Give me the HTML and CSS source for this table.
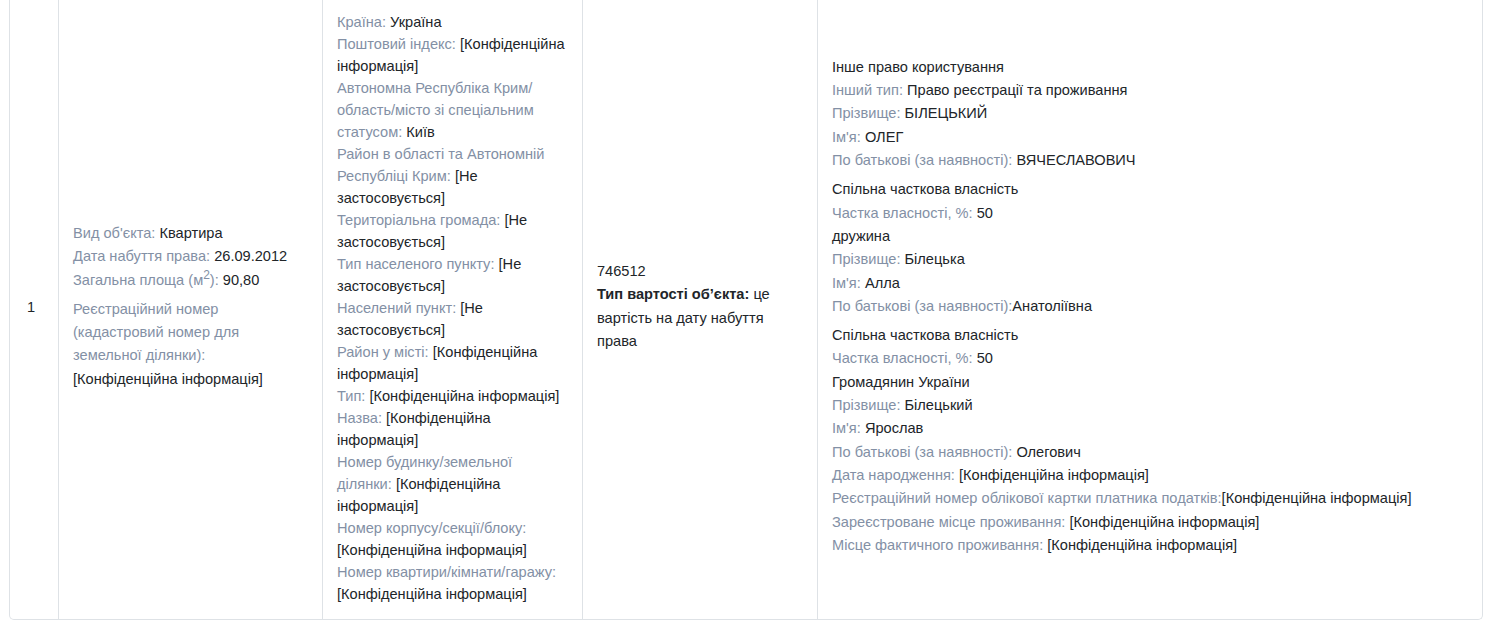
FILE: index.html
```html
<!DOCTYPE html>
<html lang="uk">
<head>
<meta charset="utf-8">
<title>Об'єкт</title>
<link rel="stylesheet" href="styles.css">
</head>
<body>
<div class="wrap">
  <table class="grid">
    <tr>
      <td class="c1">1</td>
      <td class="c2">
        <div class="blk">
          <div><span class="l">Вид об'єкта:</span> Квартира</div>
          <div><span class="l">Дата набуття права:</span> 26.09.2012</div>
          <div><span class="l">Загальна площа (м<sup>2</sup>):</span> 90,80</div>
        </div>
        <div class="blk"><span class="l">Реєстраційний номер (кадастровий номер для земельної ділянки):</span> [Конфіденційна інформація]</div>
      </td>
      <td class="c3">
        <div><span class="l">Країна:</span> Україна</div>
        <div><span class="l">Поштовий індекс:</span> [Конфіденційна інформація]</div>
        <div><span class="l">Автономна Республіка Крим/область/місто зі спеціальним статусом:</span> Київ</div>
        <div><span class="l">Район в області та Автономній Республіці Крим:</span> [Не застосовується]</div>
        <div><span class="l">Територіальна громада:</span> [Не застосовується]</div>
        <div><span class="l">Тип населеного пункту:</span> [Не застосовується]</div>
        <div><span class="l">Населений пункт:</span> [Не застосовується]</div>
        <div><span class="l">Район у місті:</span> [Конфіденційна інформація]</div>
        <div><span class="l">Тип:</span> [Конфіденційна інформація]</div>
        <div><span class="l">Назва:</span> [Конфіденційна інформація]</div>
        <div><span class="l">Номер будинку/земельної ділянки:</span> [Конфіденційна інформація]</div>
        <div><span class="l">Номер корпусу/секції/блоку:</span> [Конфіденційна інформація]</div>
        <div><span class="l">Номер квартири/кімнати/гаражу:</span> [Конфіденційна інформація]</div>
      </td>
      <td class="c4">
        <div class="blk">
          <div>746512</div>
          <div><b>Тип вартості об’єкта:</b> це вартість на дату набуття права</div>
        </div>
      </td>
      <td class="c5">
        <div class="blk">
          <div>Інше право користування</div>
          <div><span class="l">Інший тип:</span> Право реєстрації та проживання</div>
          <div><span class="l">Прізвище:</span> БІЛЕЦЬКИЙ</div>
          <div><span class="l">Ім'я:</span> ОЛЕГ</div>
          <div><span class="l">По батькові (за наявності):</span> ВЯЧЕСЛАВОВИЧ</div>
        </div>
        <div class="blk">
          <div>Спільна часткова власність</div>
          <div><span class="l">Частка власності, %:</span> 50</div>
          <div>дружина</div>
          <div><span class="l">Прізвище:</span> Білецька</div>
          <div><span class="l">Ім'я:</span> Алла</div>
          <div><span class="l">По батькові (за наявності):</span>Анатоліївна</div>
        </div>
        <div class="blk">
          <div>Спільна часткова власність</div>
          <div><span class="l">Частка власності, %:</span> 50</div>
          <div>Громадянин України</div>
          <div><span class="l">Прізвище:</span> Білецький</div>
          <div><span class="l">Ім'я:</span> Ярослав</div>
          <div><span class="l">По батькові (за наявності):</span> Олегович</div>
          <div><span class="l">Дата народження:</span> [Конфіденційна інформація]</div>
          <div><span class="l">Реєстраційний номер облікової картки платника податків:</span>[Конфіденційна інформація]</div>
          <div><span class="l">Зареєстроване місце проживання:</span> [Конфіденційна інформація]</div>
          <div><span class="l">Місце фактичного проживання:</span> [Конфіденційна інформація]</div>
        </div>
      </td>
    </tr>
  </table>
</div>
</body>
</html>
```

FILE: styles.css
```css
html, body {
  margin: 0;
  padding: 0;
  background: #fff;
}
body {
  font-family: "Liberation Sans", Arial, sans-serif;
  font-size: 14.6px;
  color: #212529;
}
.wrap {
  margin: 0 10px 0 9px;
  border: 1px solid #dee2e6;
  border-top: none;
  border-radius: 0 0 5px 5px;
  overflow: hidden;
}
.grid {
  width: 100%;
  border-collapse: separate;
  border-spacing: 0;
  table-layout: fixed;
}
.grid td {
  box-sizing: border-box;
  border-left: 1px solid #dee2e6;
  padding: 11px 14px 14px;
  vertical-align: middle;
  line-height: 23.33px;
}
.grid td.c1 {
  border-left: none;
  width: 48px;
  padding-left: 17px;
  padding-right: 8px;
}
.grid td.c2 { width: 264px; }
.grid td.c3 { width: 260px; line-height: 22px; }
.grid td.c4 { width: 235px; }
.l {
  color: #8390a5;
}
.blk {
  margin-bottom: 6px;
}
.blk:last-child {
  margin-bottom: 3px;
}
sup {
  font-size: 12px;
  line-height: 0;
  vertical-align: super;
}
b {
  font-weight: bold;
}
```
